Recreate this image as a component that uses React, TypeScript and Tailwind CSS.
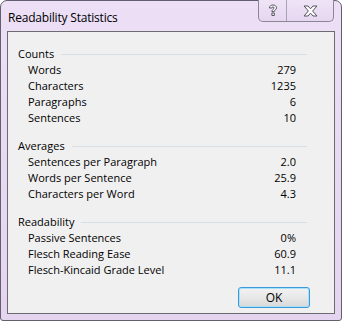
import React from "react";

type Row = { label: string; value: string };

const sections: { title: string; rows: Row[] }[] = [
  {
    title: "Counts",
    rows: [
      { label: "Words", value: "279" },
      { label: "Characters", value: "1235" },
      { label: "Paragraphs", value: "6" },
      { label: "Sentences", value: "10" },
    ],
  },
  {
    title: "Averages",
    rows: [
      { label: "Sentences per Paragraph", value: "2.0" },
      { label: "Words per Sentence", value: "25.9" },
      { label: "Characters per Word", value: "4.3" },
    ],
  },
  {
    title: "Readability",
    rows: [
      { label: "Passive Sentences", value: "0%" },
      { label: "Flesch Reading Ease", value: "60.9" },
      { label: "Flesch-Kincaid Grade Level", value: "11.1" },
    ],
  },
];

function HelpGlyph() {
  return (
    <svg width="10" height="13" viewBox="0 0 10 13">
      <path
        d="M1.5 4 C1.5 1.8 3.2 1 5 1 C7.2 1 8.5 2.2 8.5 3.8 C8.5 5.6 6.3 6 6.3 7.6 L3.9 7.6 C3.9 5.4 6.1 5 6.1 3.9 C6.1 3.3 5.6 2.9 5 2.9 C4.3 2.9 3.9 3.3 3.9 4 Z M3.9 9 L6.3 9 L6.3 11.5 L3.9 11.5 Z"
        fill="#ffffff"
        stroke="#55545f"
        strokeWidth="1"
        strokeLinejoin="round"
      />
    </svg>
  );
}

function CloseGlyph() {
  return (
    <svg width="15" height="12" viewBox="0 0 15 12">
      <path
        d="M1 1 L5 1 L7.5 3.8 L10 1 L14 1 L9.6 6 L14 11 L10 11 L7.5 8.2 L5 11 L1 11 L5.4 6 Z"
        fill="#ffffff"
        stroke="#55545f"
        strokeWidth="1"
        strokeLinejoin="round"
      />
    </svg>
  );
}

export default function App() {
  return (
    <div className="w-[342px] h-[321px] bg-white font-['Open_Sans','Noto_Sans',sans-serif] text-[11px] text-black">
      <div className="relative w-[342px] h-[321px] rounded-t-[7px] rounded-b-[3px] border border-[#62606e] bg-gradient-to-b from-[#ecdff6] to-[#e4d4f0] flex flex-col">
        {/* Title bar */}
        <div className="h-[30px] flex items-center pl-[7px] pt-[3px] text-[12px] tracking-[-0.2px]">Readability Statistics</div>

        {/* Caption buttons */}
        <div className="absolute top-[-1px] right-[7px] h-[22px] flex border border-t-0 border-[#8a8796] rounded-b-[5px] bg-gradient-to-b from-[#efe4f7] to-[#e5d7f0] overflow-hidden">
          <div className="w-[28px] flex items-center justify-center border-r border-[#a8a3b4]">
            <HelpGlyph />
          </div>
          <div className="w-[46px] flex items-center justify-center">
            <CloseGlyph />
          </div>
        </div>

        {/* Client area */}
        <div className="mx-[6px] h-[283px] border border-[#6b6b70] bg-[#f0f0f0] flex flex-col pl-[10px] pr-[27px] pt-[14px]">
          <div className="flex flex-col gap-[12px]">
            {sections.map((s) => (
              <div key={s.title} className="flex flex-col">
                <div className="h-[16px] flex items-center">
                  <span>{s.title}</span>
                  <div className="flex-1 h-px bg-[#d5dfe5] ml-[7px]" />
                </div>
                {s.rows.map((r) => (
                  <div key={r.label} className="h-[16px] flex items-center pl-[10px] pr-[11px]">
                    <span className="flex-1">{r.label}</span>
                    <span>{r.value}</span>
                  </div>
                ))}
              </div>
            ))}
          </div>
          <div className="flex justify-end mt-auto mb-[5px] mr-[-3px]">
            <button className="w-[72px] h-[21px] rounded-[3px] border border-[#3c9ad6] bg-gradient-to-b from-[#f2f2f2] via-[#e8e8e8] to-[#d8d8d8] shadow-[inset_0_0_0_1px_#a6e1f9] flex items-center justify-center text-[12px]">
              OK
            </button>
          </div>
        </div>
      </div>
    </div>
  );
}
